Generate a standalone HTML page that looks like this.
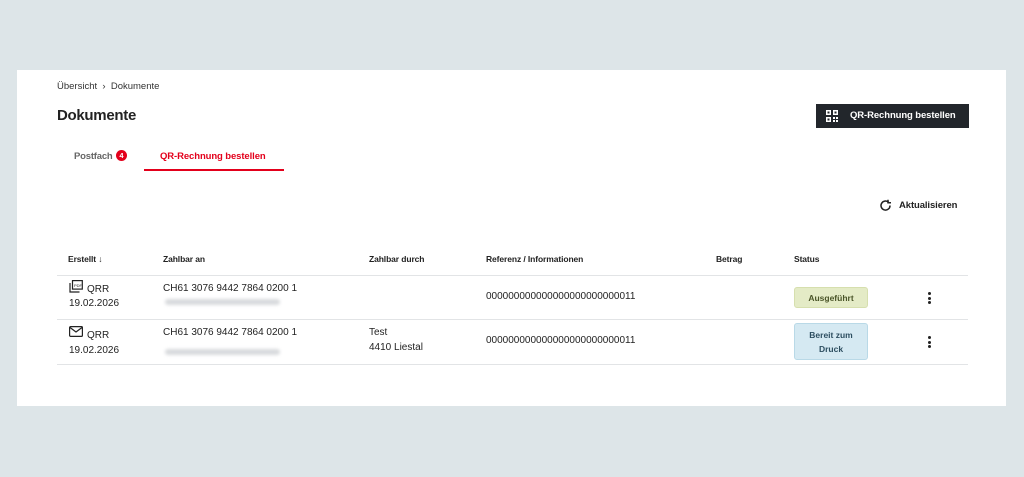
<!DOCTYPE html>
<html><head><meta charset="utf-8"><style>
*{margin:0;padding:0;box-sizing:border-box}
body{width:1024px;height:477px;background:#dde5e8;font-family:"Liberation Sans",sans-serif;color:#222;position:relative;overflow:hidden}
.card{position:absolute;left:17px;top:70px;width:989px;height:336px;background:#fff}
.a{position:absolute;white-space:nowrap}
.s{font-size:10px}
.h{font-size:8.5px;font-weight:bold;letter-spacing:-0.1px}
.line{position:absolute;left:57px;width:911px;height:1px;background:#e2e4e6}
.blur{position:absolute;height:6px;width:115px;background:#d8dadd;border-radius:3px;filter:blur(1.5px)}
.badge{position:absolute;border-radius:3px;font-size:8.5px;font-weight:bold;text-align:center}
.dots{position:absolute;width:3px}
.dots i{display:block;width:3px;height:3px;border-radius:50%;background:#222;margin-bottom:1.5px}
</style></head><body>
<div class="card"></div>
<div class="a" style="left:57px;top:81px;font-size:9.5px;color:#333">Übersicht &nbsp;›&nbsp; Dokumente</div>
<div class="a" style="left:57px;top:107px;font-size:15px;font-weight:bold;letter-spacing:-0.3px">Dokumente</div>
<div class="a" style="left:816px;top:104px;width:153px;height:24px;background:#22262b;color:#fff;font-size:9.5px;font-weight:bold;line-height:24px;padding-left:34px;letter-spacing:-0.1px">QR-Rechnung bestellen</div>
<svg class="a" style="left:826px;top:110px" width="12" height="12" viewBox="0 0 12 12" fill="#fff"><rect x="0" y="0" width="5" height="5"/><rect x="7" y="0" width="5" height="5"/><rect x="0" y="7" width="5" height="5"/><rect x="7" y="7" width="2" height="2"/><rect x="10" y="10" width="2" height="2"/><rect x="7" y="10" width="2" height="2"/><rect x="10" y="7" width="2" height="2"/><rect x="1.5" y="1.5" width="2" height="2" fill="#22262b"/><rect x="8.5" y="1.5" width="2" height="2" fill="#22262b"/><rect x="1.5" y="8.5" width="2" height="2" fill="#22262b"/></svg>
<div class="a" style="left:74px;top:151px;font-size:9.5px;font-weight:bold;color:#666;letter-spacing:-0.2px">Postfach</div>
<div class="a" style="left:116px;top:150px;width:11px;height:11px;border-radius:50%;background:#e3001b;color:#fff;font-size:7.5px;font-weight:bold;text-align:center;line-height:11px">4</div>
<div class="a" style="left:160px;top:151px;font-size:9.5px;font-weight:bold;color:#e3001b;letter-spacing:-0.1px">QR-Rechnung bestellen</div>
<div class="a" style="left:144px;top:169px;width:140px;height:2px;background:#e3001b"></div>
<svg class="a" style="left:879px;top:199px" width="13" height="13" viewBox="0 0 13 13" fill="none" stroke="#222" stroke-width="1.5"><path d="M11 6.5A4.5 4.5 0 1 1 9.5 3.2"/><path d="M9 0.8V3.8H12" /></svg>
<div class="a" style="left:899px;top:200px;font-size:9.5px;font-weight:bold;letter-spacing:-0.1px">Aktualisieren</div>
<div class="a h" style="left:68px;top:254px">Erstellt ↓</div>
<div class="a h" style="left:163px;top:254px">Zahlbar an</div>
<div class="a h" style="left:369px;top:254px">Zahlbar durch</div>
<div class="a h" style="left:486px;top:254px">Referenz / Informationen</div>
<div class="a h" style="left:716px;top:254px">Betrag</div>
<div class="a h" style="left:794px;top:254px">Status</div>
<div class="line" style="top:275px"></div>
<div class="line" style="top:319px"></div>
<div class="line" style="top:364px"></div>
<svg class="a" style="left:69px;top:280px" width="14" height="13" viewBox="0 0 14 13" fill="none" stroke="#222" stroke-width="1.2"><rect x="3.5" y="0.6" width="9.8" height="8.5"/><path d="M1 3v9h9.5"/><text x="5" y="7" font-size="4" fill="#222" stroke="none" font-family="Liberation Sans">PDF</text></svg>
<div class="a s" style="left:87px;top:284px">QRR</div>
<div class="a s" style="left:69px;top:298px">19.02.2026</div>
<div class="a s" style="left:163px;top:283px">CH61 3076 9442 7864 0200 1</div>
<div class="blur" style="left:165px;top:299px"></div>
<div class="a s" style="left:486px;top:291px">000000000000000000000000011</div>
<div class="badge" style="left:794px;top:287px;width:74px;height:21px;line-height:21px;background:#e4ebc6;border:1px solid #d6dfae;color:#4a5528">Ausgeführt</div>
<div class="dots" style="left:928px;top:292px"><i></i><i></i><i></i></div>
<svg class="a" style="left:69px;top:326px" width="14" height="11" viewBox="0 0 14 11" fill="none" stroke="#222" stroke-width="1.2"><rect x="0.6" y="0.6" width="12.8" height="9.8" rx="1"/><path d="M1 1.5l6 4.5 6-4.5"/></svg>
<div class="a s" style="left:87px;top:330px">QRR</div>
<div class="a s" style="left:69px;top:345px">19.02.2026</div>
<div class="a s" style="left:163px;top:327px">CH61 3076 9442 7864 0200 1</div>
<div class="blur" style="left:165px;top:349px"></div>
<div class="a s" style="left:369px;top:327px">Test</div>
<div class="a s" style="left:369px;top:342px">4410 Liestal</div>
<div class="a s" style="left:486px;top:335px">000000000000000000000000011</div>
<div class="badge" style="left:794px;top:323px;width:74px;height:37px;padding-top:4px;line-height:14px;background:#d5e9f2;border:1px solid #b9d9e7;color:#2d4e60">Bereit zum<br>Druck</div>
<div class="dots" style="left:928px;top:336px"><i></i><i></i><i></i></div>
</body></html>
